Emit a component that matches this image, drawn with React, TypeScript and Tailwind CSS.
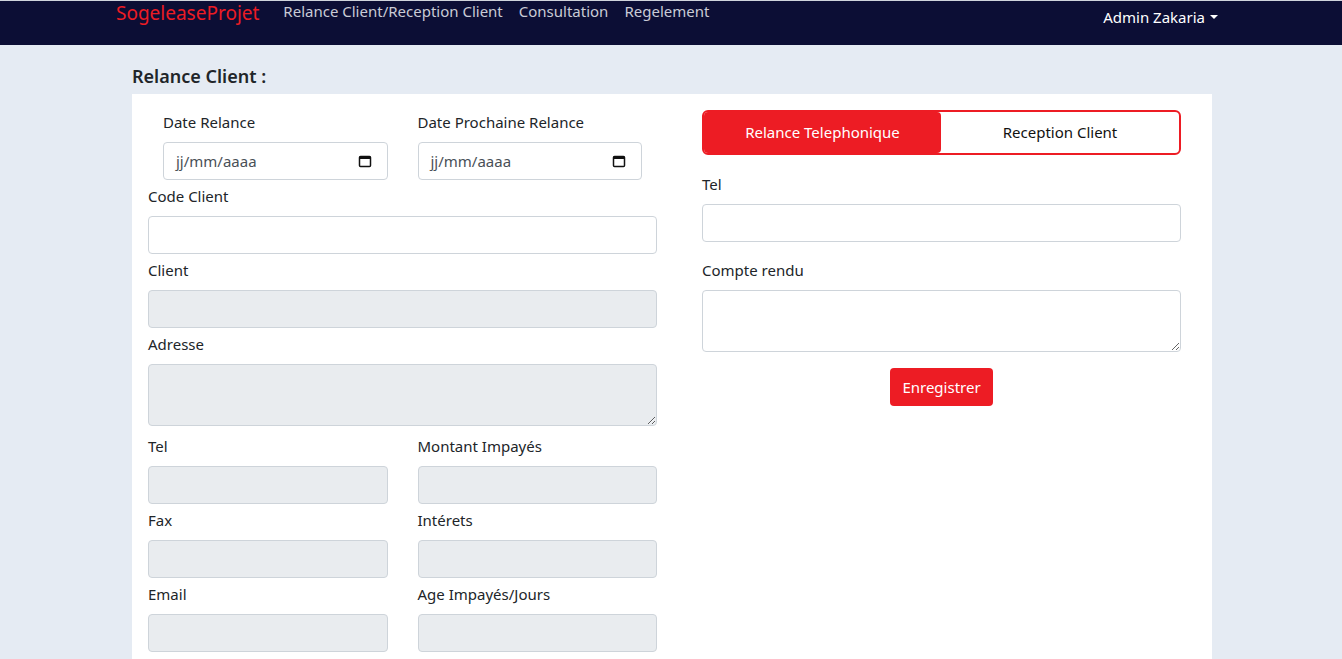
import React from "react";

const font = { fontFamily: '"Segoe UI", "Noto Sans", "Liberation Sans", sans-serif' };

function Label({ children }: { children: React.ReactNode }) {
  return <label className="block h-6 leading-6 text-[15px] text-[#212529] mb-2">{children}</label>;
}

function Field({ label, disabled, area }: { label: string; disabled?: boolean; area?: boolean }) {
  const base =
    "block w-full border border-[#ced4da] rounded-[4px] " + (disabled ? "bg-[#e9ecef]" : "bg-white");
  return (
    <div className={area ? "mb-2" : "mb-1"}>
      <Label>{label}</Label>
      {area ? (
        <textarea disabled={disabled} className={base + " h-[62px] resize-y"} />
      ) : (
        <input disabled={disabled} className={base + " h-[38px]"} />
      )}
    </div>
  );
}

function DateField({ label }: { label: string }) {
  return (
    <div className="mb-1">
      <Label>{label}</Label>
      <div className="h-[38px] border border-[#ced4da] rounded-[4px] bg-white flex items-center justify-between pl-3 pr-[15px] text-[#495057] text-[15px]">
        <span>jj/mm/aaaa</span>
        <svg width="14" height="14" viewBox="0 0 14 14">
          <rect x="1.5" y="2.5" width="11" height="10" rx="1" fill="none" stroke="#111" strokeWidth="1.5" />
          <rect x="1.5" y="2.5" width="11" height="2.5" fill="#111" />
        </svg>
      </div>
    </div>
  );
}

export default function App() {
  return (
    <div className="min-h-screen bg-[#e5ebf3]" style={font}>
      <nav className="bg-[#0c0e35] h-[45px] border-t border-[#d0d4dc]">
        <div className="w-[1140px] mx-auto px-[15px] flex items-start justify-between">
          <div className="flex items-start -mt-[1px]">
            <span className="text-[19px] leading-[26px] text-[#ed1c24] mr-4">SogeleaseProjet</span>
            <a className="text-[15px] leading-[22px] text-[#c9cbd6] px-2">Relance Client/Reception Client</a>
            <a className="text-[15px] leading-[22px] text-[#c9cbd6] px-2">Consultation</a>
            <a className="text-[15px] leading-[22px] text-[#c9cbd6] px-2">Regelement</a>
          </div>
          <a className="text-[15px] leading-[24px] text-white px-2 pt-1 flex items-center">
            Admin Zakaria
            <span className="ml-[5px] w-0 h-0 border-l-[4px] border-r-[4px] border-t-[4px] border-l-transparent border-r-transparent border-t-white" />
          </a>
        </div>
      </nav>

      <div className="w-[1080px] ml-[132px]">
        <h4 className="text-[18px] font-semibold text-[#212529] leading-[24px] pt-[19px] pb-[6px]">Relance Client :</h4>
        <div className="bg-white flex pl-4 pt-4 pb-2">
          <div className="w-[509px]">
            <div className="grid grid-cols-2 gap-x-[30px] px-[15px]">
              <DateField label="Date Relance" />
              <DateField label="Date Prochaine Relance" />
            </div>
            <Field label="Code Client" />
            <Field label="Client" disabled />
            <Field label="Adresse" disabled area />
            <div className="grid grid-cols-2 gap-x-[30px]">
              <Field label="Tel" disabled />
              <Field label="Montant Impayés" disabled />
              <Field label="Fax" disabled />
              <Field label="Intérets" disabled />
              <Field label="Email" disabled />
              <Field label="Age Impayés/Jours" disabled />
            </div>
          </div>

          <div className="w-[479px] ml-[45px]">
            <div className="h-[45px] border-2 border-[#ed1c24] rounded-[6px] flex text-[15px]">
              <button className="w-[237px] bg-[#ed1c24] text-white rounded-[4px]">Relance Telephonique</button>
              <button className="flex-1 text-[#111]">Reception Client</button>
            </div>
            <div className="mt-[17px]">
              <Label>Tel</Label>
              <input className="block w-full h-[38px] border border-[#ced4da] rounded-[4px]" />
            </div>
            <div className="mt-4">
              <Label>Compte rendu</Label>
              <textarea className="block w-full h-[62px] border border-[#ced4da] rounded-[4px] resize-y" />
            </div>
            <div className="flex justify-center mt-4">
              <button className="h-[38px] px-3 bg-[#ed1c24] text-white text-[15px] rounded-[4px]">Enregistrer</button>
            </div>
          </div>
        </div>
      </div>
    </div>
  );
}
